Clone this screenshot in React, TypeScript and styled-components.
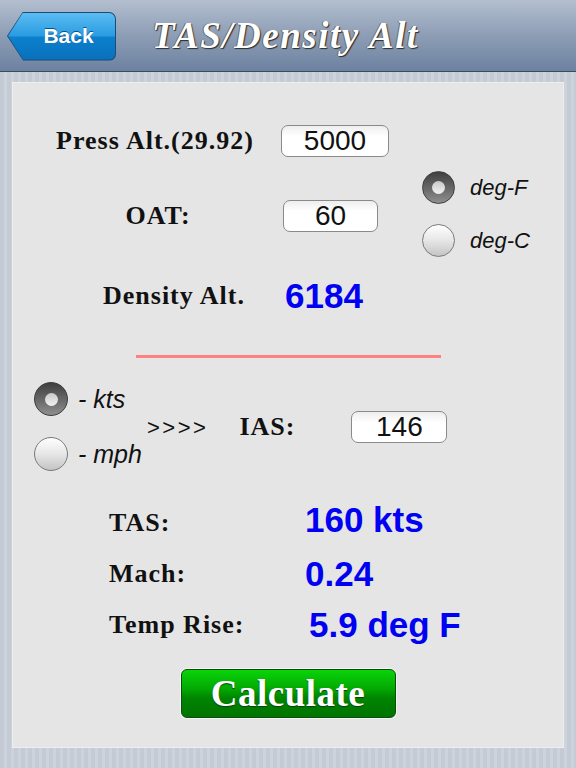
import React, { useState } from 'react';
import styled, { createGlobalStyle } from 'styled-components';

const GlobalStyle = createGlobalStyle`
  * {
    box-sizing: border-box;
  }
  body {
    margin: 0;
    font-family: 'Liberation Sans', Arial, sans-serif;
    background: repeating-linear-gradient(
      90deg,
      #c4cbd5 0px,
      #c4cbd5 4px,
      #ccd3dc 4px,
      #ccd3dc 7px
    );
  }
`;

const Screen = styled.div`
  width: 576px;
  height: 768px;
  display: flex;
  flex-direction: column;
  overflow: hidden;
`;

const Header = styled.header`
  height: 72px;
  display: flex;
  align-items: center;
  padding-left: 7px;
  background: linear-gradient(#b3bfcf, #8d9db5 50%, #6c82a1);
  border-bottom: 1px solid #3e4b5d;
`;

const BackOuter = styled.button`
  width: 109px;
  height: 49px;
  margin-top: 1px;
  padding: 1px;
  border: none;
  background: #1b4b78;
  border-radius: 0 7px 7px 0;
  clip-path: polygon(16px 0, 100% 0, 100% 100%, 16px 100%, 0 50%);
  cursor: pointer;
`;

const BackInner = styled.span`
  display: flex;
  align-items: center;
  justify-content: center;
  height: 100%;
  padding-left: 14px;
  border-radius: 0 6px 6px 0;
  clip-path: polygon(15px 0, 100% 0, 100% 100%, 15px 100%, 0 50%);
  background: linear-gradient(#5bbcf2, #2a9ce2 48%, #0c80cc 52%, #0a70bb);
  color: #fff;
  font-family: 'Liberation Sans', Arial, sans-serif;
  font-weight: bold;
  font-size: 21px;
  text-shadow: 0 -1px 0 #0b4f85;
`;

const Title = styled.h1`
  margin: 0 0 0 36px;
  font-family: 'Liberation Serif', 'Times New Roman', serif;
  font-style: italic;
  font-weight: bold;
  font-size: 37px;
  letter-spacing: 1.5px;
  color: #fff;
  text-shadow: 1px 1px 1px #2b2b2b, -1px 0 0 #6a6a6a;
`;

const Panel = styled.main`
  margin: 10px 12px 0 12px;
  height: 666px;
  background: #e5e5e5;
  border: 1px solid #eeeeee;
  display: flex;
  flex-direction: column;
`;

const TopSection = styled.section`
  display: grid;
  grid-template-columns: 396px 1fr;
  padding-top: 42px;
`;

const LeftCol = styled.div`
  display: flex;
  flex-direction: column;
`;

const FieldRow = styled.div<{ $top?: number; $indent: number }>`
  display: flex;
  align-items: center;
  height: 32px;
  margin-top: ${(p) => p.$top ?? 0}px;
  padding-left: ${(p) => p.$indent}px;
`;

const Label = styled.span<{ $width?: number; $center?: boolean }>`
  display: inline-block;
  width: ${(p) => (p.$width ? `${p.$width}px` : 'auto')};
  text-align: ${(p) => (p.$center ? 'center' : 'left')};
  font-family: 'Liberation Serif', 'Times New Roman', serif;
  font-weight: bold;
  font-size: 26px;
  letter-spacing: 1px;
  color: #111;
  white-space: nowrap;
`;

const NumberInput = styled.input<{ $width: number; $gap: number }>`
  width: ${(p) => p.$width}px;
  height: 32px;
  margin-left: ${(p) => p.$gap}px;
  padding: 0;
  border: 1.5px solid #8a8a8a;
  border-radius: 7px;
  background: linear-gradient(#eeeeee, #ffffff 35%);
  font-family: 'Liberation Sans', Arial, sans-serif;
  font-size: 28px;
  line-height: 30px;
  text-align: center;
  color: #111;
  outline: none;
`;

const Value = styled.span<{ $raise?: number; $shift?: number }>`
  font-family: 'Liberation Sans', Arial, sans-serif;
  font-weight: bold;
  font-size: 35px;
  color: #0000f2;
  white-space: nowrap;
  padding-left: ${(p) => p.$shift ?? 0}px;
  margin-top: ${(p) => -(p.$raise ?? 0) * 2}px;
`;

const RadioGroup = styled.div<{ $top: number; $left: number; $gap: number }>`
  display: flex;
  flex-direction: column;
  gap: ${(p) => p.$gap}px;
  padding-top: ${(p) => p.$top}px;
  padding-left: ${(p) => p.$left}px;
`;

const RadioOption = styled.label<{ $gap: number; $size: number }>`
  display: flex;
  align-items: center;
  gap: ${(p) => p.$gap}px;
  cursor: pointer;
  font-family: 'Liberation Sans', Arial, sans-serif;
  font-style: italic;
  font-size: ${(p) => p.$size}px;
  color: #111;
  white-space: nowrap;
`;

const RadioDot = styled.span<{ $checked: boolean; $dia: number }>`
  display: flex;
  align-items: center;
  justify-content: center;
  width: ${(p) => p.$dia}px;
  height: ${(p) => p.$dia}px;
  flex-shrink: 0;
  border-radius: 50%;
  border: 1.5px solid ${(p) => (p.$checked ? '#3c3c3c' : '#7a7a7a')};
  background: ${(p) =>
    p.$checked
      ? 'linear-gradient(#3f3f3f, #6e6e6e 60%, #8f8f8f)'
      : 'linear-gradient(#ffffff, #e6e6e6 50%, #c4c4c4)'};

  &::after {
    content: '';
    display: ${(p) => (p.$checked ? 'block' : 'none')};
    width: 13px;
    height: 13px;
    border-radius: 50%;
    background: linear-gradient(#c8c8c8, #f2f2f2);
  }
`;

const Divider = styled.hr`
  width: 305px;
  height: 3px;
  margin: 43px 0 0 123px;
  border: none;
  background: #ff8080;
`;

const SpeedSection = styled.section`
  display: flex;
  align-items: center;
  margin-top: 24px;
`;

const SpeedUnits = styled.div`
  width: 134px;
`;

const Arrows = styled.span`
  font-family: 'Liberation Sans', Arial, sans-serif;
  font-size: 22px;
  letter-spacing: 2.5px;
  color: #111;
  margin-top: 2px;
`;

const IasLabel = styled(Label)`
  margin-left: 31px;
`;

const Results = styled.section`
  display: grid;
  grid-template-columns: 196px 1fr;
  grid-auto-rows: 51px;
  align-items: center;
  margin-top: 26px;
  padding-left: 96px;
`;

const CalcButton = styled.button`
  align-self: center;
  width: 215px;
  height: 49px;
  margin-top: 19px;
  border: 1px solid #0b4d0b;
  border-radius: 6px;
  background: linear-gradient(#0ad40a, #02a902 40%, #008400 60%, #007400);
  box-shadow: 0 0 0 1px #f4f4f4;
  color: #fff;
  font-family: 'Liberation Serif', 'Times New Roman', serif;
  font-weight: bold;
  font-size: 37px;
  letter-spacing: 0.5px;
  line-height: 1;
  text-shadow: 0 1px 1px #0a3d0a;
  cursor: pointer;
`;

type RadioProps = {
  label: string;
  checked: boolean;
  gap: number;
  size: number;
  dia: number;
  onSelect: () => void;
};

const Radio = ({ label, checked, gap, size, dia, onSelect }: RadioProps) => (
  <RadioOption $gap={gap} $size={size} onClick={onSelect}>
    <RadioDot $checked={checked} $dia={dia} />
    {label}
  </RadioOption>
);

const App = () => {
  const [tempUnit, setTempUnit] = useState<'F' | 'C'>('F');
  const [speedUnit, setSpeedUnit] = useState<'kts' | 'mph'>('kts');

  return (
    <Screen>
      <GlobalStyle />
      <Header>
        <BackOuter>
          <BackInner>Back</BackInner>
        </BackOuter>
        <Title>TAS/Density Alt</Title>
      </Header>
      <Panel>
        <TopSection>
          <LeftCol>
            <FieldRow $indent={27}>
              <Label $width={230} $center>
                Press Alt.(29.92)
              </Label>
              <NumberInput $width={108} $gap={11} defaultValue="5000" />
            </FieldRow>
            <FieldRow $indent={33} $top={43}>
              <Label $width={224} $center>
                OAT:
              </Label>
              <NumberInput $width={95} $gap={13} defaultValue="60" />
            </FieldRow>
            <FieldRow $indent={90} $top={48}>
              <Label $width={182}>Density Alt.</Label>
              <Value>6184</Value>
            </FieldRow>
          </LeftCol>
          <RadioGroup $top={46} $left={13} $gap={20}>
            <Radio
              label="deg-F"
              gap={15}
              size={22}
              dia={33}
              checked={tempUnit === 'F'}
              onSelect={() => setTempUnit('F')}
            />
            <Radio
              label="deg-C"
              gap={15}
              size={22}
              dia={33}
              checked={tempUnit === 'C'}
              onSelect={() => setTempUnit('C')}
            />
          </RadioGroup>
        </TopSection>

        <Divider />

        <SpeedSection>
          <SpeedUnits>
            <RadioGroup $top={0} $left={21} $gap={21}>
              <Radio
                label="- kts"
                gap={10}
                size={25}
                dia={34}
                checked={speedUnit === 'kts'}
                onSelect={() => setSpeedUnit('kts')}
              />
              <Radio
                label="- mph"
                gap={10}
                size={25}
                dia={34}
                checked={speedUnit === 'mph'}
                onSelect={() => setSpeedUnit('mph')}
              />
            </RadioGroup>
          </SpeedUnits>
          <Arrows>&gt;&gt;&gt;&gt;</Arrows>
          <IasLabel>IAS:</IasLabel>
          <NumberInput $width={96} $gap={56} defaultValue="146" />
        </SpeedSection>

        <Results>
          <Label>TAS:</Label>
          <Value $raise={3}>160 kts</Value>
          <Label>Mach:</Label>
          <Value>0.24</Value>
          <Label>Temp Rise:</Label>
          <Value $shift={4}>5.9 deg F</Value>
        </Results>

        <CalcButton>Calculate</CalcButton>
      </Panel>
    </Screen>
  );
};

export default App;
